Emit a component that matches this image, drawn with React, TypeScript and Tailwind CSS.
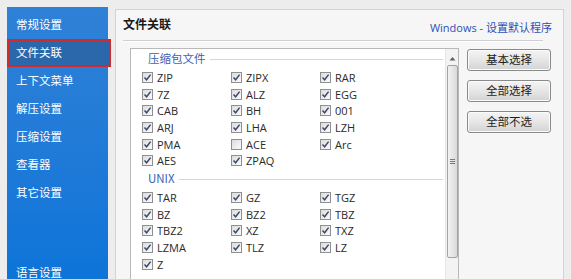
import React from "react";

const cjk = { fontFamily: '"Noto Sans CJK SC", "Noto Sans", sans-serif' };
const latin = { fontFamily: '"Open Sans", "Noto Sans CJK SC", sans-serif' };

const menu = ["常规设置", "文件关联", "上下文菜单", "解压设置", "压缩设置", "查看器", "其它设置"];

const archives: [string, boolean][] = [
  ["ZIP", true], ["ZIPX", true], ["RAR", true],
  ["7Z", true], ["ALZ", true], ["EGG", true],
  ["CAB", true], ["BH", true], ["001", true],
  ["ARJ", true], ["LHA", true], ["LZH", true],
  ["PMA", true], ["ACE", false], ["Arc", true],
  ["AES", true], ["ZPAQ", true],
];

const unix: [string, boolean][] = [
  ["TAR", true], ["GZ", true], ["TGZ", true],
  ["BZ", true], ["BZ2", true], ["TBZ", true],
  ["TBZ2", true], ["XZ", true], ["TXZ", true],
  ["LZMA", true], ["TLZ", true], ["LZ", true],
  ["Z", true],
];

function Check({ label, checked }: { label: string; checked: boolean }) {
  return (
    <div className="flex items-center h-[16.7px]">
      <div className="w-[11px] h-[11px] border border-[#8f8f8f] bg-gradient-to-br from-[#dcdcdc] to-[#fbfbfb] flex items-center justify-center">
        {checked && (
          <svg width="9" height="9" viewBox="0 0 9 9">
            <path d="M1.5 4.6 L3.6 6.8 L7.6 1.6" fill="none" stroke="#3b4a6b" strokeWidth="1.5" />
          </svg>
        )}
      </div>
      <span className="ml-[4px] text-[11px] text-[#2a2a2a] leading-none" style={latin}>
        {label}
      </span>
    </div>
  );
}

function Group({ title, items }: { title: string; items: [string, boolean][] }) {
  return (
    <div>
      <div className="h-[20px] flex items-center pl-[17px] pr-[2px]">
        <span className="text-[11.5px] text-[#3b62b5] leading-none" style={cjk}>
          {title}
        </span>
        <div className="flex-1 ml-[4px] h-px bg-[#c9d9ea]" />
      </div>
      <div className="grid grid-cols-[89px_89px_89px] pl-[11px]">
        {items.map(([l, c]) => (
          <Check key={l} label={l} checked={c} />
        ))}
      </div>
    </div>
  );
}

function Button({ children }: { children: React.ReactNode }) {
  return (
    <div
      className="w-[84px] h-[22px] rounded-[3px] border border-[#8a8a8a] bg-gradient-to-b from-[#f4f4f4] via-[#e6e6e6] to-[#d3d3d3] flex items-center justify-center text-[11.5px] text-[#1e1e1e] shadow-[inset_0_0_0_1px_#fbfbfb]"
      style={cjk}
    >
      {children}
    </div>
  );
}

export default function App() {
  return (
    <div className="w-[571px] h-[279px] overflow-hidden bg-[#ededed] flex pt-[7px] pl-[7px]">
      {/* sidebar */}
      <div className="w-[101px] h-[290px] bg-gradient-to-b from-[#2f81d6] to-[#0873d9] flex flex-col pt-[4px] shrink-0">
        {menu.map((m, i) =>
          i === 1 ? (
            <div
              key={m}
              className="h-[28px] w-[104px] border-2 border-[#d12a2a] bg-[#2b68ab] flex items-center pl-[7px] text-[11.5px] text-white"
              style={cjk}
            >
              {m}
            </div>
          ) : (
            <div key={m} className="h-[28px] flex items-center pl-[9px] text-[11.5px] text-white" style={cjk}>
              {m}
            </div>
          )
        )}
        <div className="h-[52px]" />
        <div className="h-[28px] flex items-center pl-[9px] text-[11.5px] text-white" style={cjk}>
          语言设置
        </div>
      </div>

      {/* main panel */}
      <div className="ml-[7px] mt-[2px] w-[449px] h-[290px] border border-[#d3d3d3] bg-[#f6f6f6] flex flex-col shrink-0">
        <div className="h-[30px] flex justify-between pl-[7px] pr-[11px]">
          <span className="mt-[6px] text-[12px] font-bold text-[#1a1a1a] leading-[16px]" style={cjk}>
            文件关联
          </span>
          <span className="mt-[10px] text-[11px] text-[#2b4fb5] leading-[16px]" style={latin}>
            Windows - 设置默认程序
          </span>
        </div>
        <div className="ml-[7px] mr-[20px] h-px bg-[#cfcfcf] border-b border-white box-content" />

        <div className="flex mt-[6px]">
          {/* list box */}
          <div className="ml-[14px] w-[329px] h-[240px] border border-[#b9b9b9] bg-white flex">
            <div className="flex-1">
              <Group title="压缩包文件" items={archives} />
              <Group title="UNIX" items={unix} />
            </div>
            <div className="w-[13px] border-l border-[#e6e6e6] bg-[#f3f3f3] flex flex-col items-center">
              <svg width="7" height="5" viewBox="0 0 7 5" className="mt-[7px]">
                <path d="M0.5 4.5 L3.5 1 L6.5 4.5 Z" fill="#606060" />
              </svg>
              <div className="mt-[4px] w-[11px] h-[193px] rounded-[2px] border border-[#a3a3a3] bg-gradient-to-r from-[#f2f2f2] to-[#d9d9d9] flex items-center justify-center">
                <div className="flex flex-col gap-[1px]">
                  <div className="w-[5px] h-px bg-[#7a7a7a]" />
                  <div className="w-[5px] h-px bg-[#7a7a7a]" />
                  <div className="w-[5px] h-px bg-[#7a7a7a]" />
                </div>
              </div>
            </div>
          </div>

          {/* buttons */}
          <div className="ml-[8px] mt-[1px] flex flex-col gap-[9px]">
            <Button>基本选择</Button>
            <Button>全部选择</Button>
            <Button>全部不选</Button>
          </div>
        </div>
      </div>
    </div>
  );
}
